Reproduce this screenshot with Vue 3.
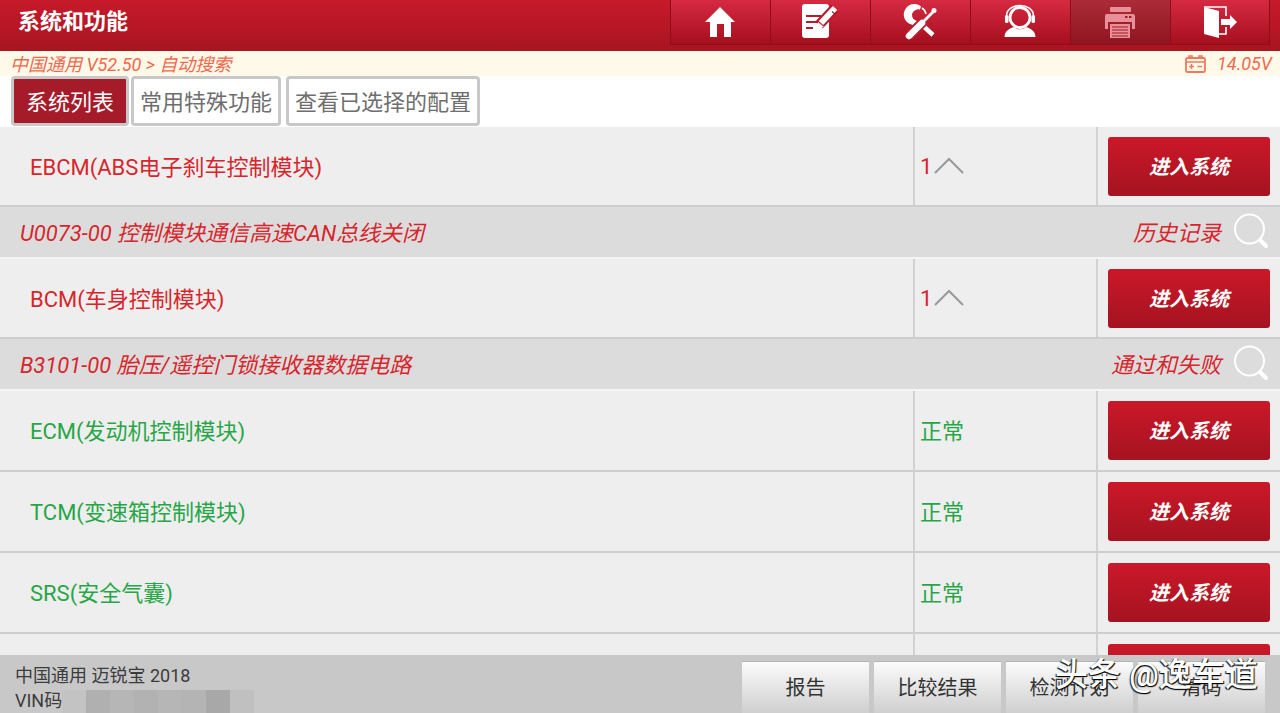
<script setup>
import { ref } from 'vue'

const activeTab = ref(0)
const tabs = ['系统列表', '常用特殊功能', '查看已选择的配置']
const toolbar = ['home', 'edit', 'tools', 'support', 'print', 'exit']
const footerBtns = ['报告', '比较结果', '检测计划', '清码']
const blurCells = ['#c3c3c3', '#b0b0b0', '#b6b6b6', '#b2b2b2', '#b6b6b6', '#b4b4b4', '#a8a8a8', '#c0c0c0']

const rows = [
  { type: 'sys', name: 'EBCM(ABS电子刹车控制模块)', count: 1, cls: 'short' },
  { type: 'code', text: 'U0073-00 控制模块通信高速CAN总线关闭', status: '历史记录' },
  { type: 'sys', name: 'BCM(车身控制模块)', count: 1, cls: 'short' },
  { type: 'code', text: 'B3101-00 胎压/遥控门锁接收器数据电路', status: '通过和失败' },
  { type: 'sys', name: 'ECM(发动机控制模块)', ok: true },
  { type: 'sys', name: 'TCM(变速箱控制模块)', ok: true },
  { type: 'sys', name: 'SRS(安全气囊)', ok: true },
  { type: 'sys', name: '', blank: true }
]
</script>

<template>
  <div class="page">
    <header class="topbar">
      <div class="title">系统和功能</div>
      <div class="toolbar">
        <button
          v-for="item in toolbar"
          :key="item"
          class="tool"
          :class="{ disabled: item === 'print' }"
        >
          <svg width="40" height="40" viewBox="0 0 40 40">
            <path v-if="item === 'home'" fill="#fff" d="M20 5 L35 20 H31 V35 H24 V22 H17 V35 H10 V20 H5 Z" />
            <g v-else-if="item === 'edit'">
              <rect x="2" y="2" width="27" height="34" rx="3" fill="#fff" />
              <path d="M6 14 H21 M6 20 H17 M6 26 H13" stroke="#b8192b" stroke-width="2" fill="none" />
              <path d="M35 6 L19 23" stroke="#b8192b" stroke-width="10" fill="none" />
              <path d="M35 6 L21 21" stroke="#fff" stroke-width="6" fill="none" />
              <path d="M17 27 L18 20 L24 25 Z" fill="#fff" />
              <path d="M32 9.5 L36 13" stroke="#b8192b" stroke-width="1.2" />
            </g>
            <g v-else-if="item === 'tools'">
              <path d="M21 4.500 A10.500 10.500 0 1 0 13 23 L17 19 A7 7 0 0 1 12 12 A7 7 0 0 1 20 7.500 Z" fill="#fff" />
              <path d="M22 6 A9 9 0 0 1 26 12" fill="none" stroke="#fff" stroke-width="1.500" />
              <path d="M20 21 L33 33" stroke="#fff" stroke-width="4.500" fill="none" />
              <path d="M9 34 L23 20" stroke="#bd1d2e" stroke-width="10" fill="none" />
              <path d="M9 34 L22 21" stroke="#fff" stroke-width="6.500" stroke-linecap="round" fill="none" />
              <path d="M21 22 L33 10" stroke="#fff" stroke-width="2.800" fill="none" />
              <circle cx="34" cy="8.500" r="2.500" fill="#fff" />
            </g>
            <g v-else-if="item === 'support'">
              <circle cx="20" cy="15.500" r="10" fill="none" stroke="#fff" stroke-width="2.800" />
              <path d="M6.500 19 V14 C6.500 0 33.500 0 33.500 14 V19" fill="none" stroke="#fff" stroke-width="1.600" />
              <rect x="5" y="13" width="3.500" height="8" rx="1.500" fill="#fff" />
              <rect x="31.500" y="13" width="3.500" height="8" rx="1.500" fill="#fff" />
              <path d="M4.500 35 C4.500 29 10 26 14 25 C17 28 23 28 26 25 C30 26 35.500 29 35.500 35 Z" fill="#fff" />
            </g>
            <g v-else-if="item === 'print'" fill="#e88f99">
              <rect x="10" y="5" width="21" height="5" rx="1" />
              <path d="M7 12 H33 Q35 12 35 14 V27 H32 V20 H8 V27 H5 V14 Q5 12 7 12 Z" />
              <path d="M10 22 H30 V36 H10 Z" />
              <path d="M12 25 H28 M12 28 H28 M12 31 H28 M12 34 H28" stroke="#a51a28" stroke-width="1" />
              <rect x="25" y="14" width="2.500" height="2" fill="#a51a28" />
              <rect x="29" y="14" width="2.500" height="2" fill="#a51a28" />
            </g>
            <g v-else>
              <path d="M5 5 H27 V14 M27 25 V32 H20" fill="none" stroke="#fff" stroke-width="1.600" />
              <path d="M5 5 L20 9 V36 L5 32 Z" fill="#fff" />
              <path d="M22 17 H31 V13 L38 20 L31 27 V23 H22 Z" fill="#fff" />
            </g>
          </svg>
        </button>
      </div>
    </header>

    <div class="crumb">
      <span>中国通用 V52.50 &gt; 自动搜索</span>
      <span class="volt">
        <svg width="21" height="18" viewBox="0 0 21 18">
          <path d="M4 3 V1 H7 V3 M14 3 V1 H17 V3" fill="none" stroke="#f0795c" stroke-width="1.500" />
          <rect x="1" y="3" width="19" height="14" rx="1.500" fill="none" stroke="#f0795c" stroke-width="1.800" />
          <path d="M1 7 H20 M4 11.500 H9 M6.500 9 V14 M12.500 11.500 H17" fill="none" stroke="#f0795c" stroke-width="1.500" />
        </svg>
        <i>14.05V</i>
      </span>
    </div>

    <nav class="tabs">
      <div
        v-for="(tab, i) in tabs"
        :key="tab"
        class="tab"
        :class="{ active: activeTab === i }"
        @click="activeTab = i"
      >{{ tab }}</div>
    </nav>

    <main class="list">
      <template v-for="(row, i) in rows" :key="i">
        <div v-if="row.type === 'code'" class="code-row">
          <span class="code-text">{{ row.text }}</span>
          <span class="code-status">{{ row.status }}</span>
          <svg class="search" width="36" height="36" viewBox="0 0 36 36">
            <circle cx="16.500" cy="16" r="14.500" fill="none" stroke="#fff" stroke-width="2" />
            <path d="M27 27 L33 33" stroke="#fff" stroke-width="4" stroke-linecap="round" />
          </svg>
        </div>
        <div v-else class="sys-row" :class="[row.cls, { ok: row.ok }]">
          <div class="cell name">{{ row.name }}</div>
          <div class="cell state">
            <template v-if="row.count">
              <span>{{ row.count }}</span>
              <svg width="32" height="18" viewBox="0 0 32 18">
                <path d="M2 16 L16 2 L30 16" fill="none" stroke="#999" stroke-width="2" />
              </svg>
            </template>
            <span v-else-if="row.ok">正常</span>
          </div>
          <div class="cell action">
            <button class="enter">{{ row.blank ? '' : '进入系统' }}</button>
          </div>
        </div>
      </template>
    </main>

    <footer class="footer">
      <div class="car-info">
        <div>中国通用 迈锐宝 2018</div>
        <div class="vin">
          VIN码
          <span class="mosaic">
            <i v-for="(c, i) in blurCells" :key="i" :style="{ background: c }"></i>
          </span>
        </div>
      </div>
      <div class="footer-btns">
        <button v-for="b in footerBtns" :key="b" class="foot-btn">{{ b }}</button>
      </div>
    </footer>

    <div class="watermark">头条 @逸车道</div>
  </div>
</template>

<style>
html, body {
  margin: 0;
  background: #fff;
}
</style>

<style scoped>
.page {
  position: relative;
  width: 1280px;
  height: 713px;
  overflow: hidden;
  display: flex;
  flex-direction: column;
  background: #fff;
  font-family: Roboto, "Noto Sans CJK SC", sans-serif;
}

.topbar {
  height: 51px;
  flex: none;
  display: flex;
  justify-content: space-between;
  background: linear-gradient(#c71a2b, #a81420);
}

.title {
  padding-left: 18px;
  line-height: 44px;
  font-size: 22px;
  font-weight: 700;
  color: #fff;
}

.toolbar {
  display: flex;
  height: 44px;
  margin-right: 10px;
  border-bottom: 1px solid #8f0d18;
}

.tool {
  width: 100px;
  padding: 0 2px 0 0;
  border: 0;
  border-left: 1px solid #8f0d18;
  display: flex;
  align-items: center;
  justify-content: center;
  background: linear-gradient(#d62a41, #a50f1e);
}

.tool:last-child {
  border-right: 1px solid #8f0d18;
}

.tool.disabled {
  background: linear-gradient(#ab2c38, #8f1520);
}

.crumb {
  height: 25px;
  flex: none;
  box-sizing: border-box;
  display: flex;
  justify-content: space-between;
  align-items: center;
  padding: 0 8px 2px 10px;
  background: #fff9e9;
  color: #f0694f;
  font-size: 18px;
  font-style: italic;
}

.volt {
  display: flex;
  align-items: center;
  gap: 11px;
  margin-top: 2px;
}

.volt i {
  font-size: 18px;
}

.tabs {
  height: 51px;
  flex: none;
  box-sizing: border-box;
  padding: 0 0 0 11px;
  display: flex;
  align-items: flex-start;
}

.tab {
  box-sizing: border-box;
  height: 50px;
  padding: 0 6px;
  margin-right: 5px;
  border: 3px solid #c8c8c8;
  border-radius: 4px;
  background: #fff;
  color: #6e6e6e;
  font-size: 22px;
  line-height: 47px;
}

.tab.active {
  padding: 0 12px;
  margin-right: 2px;
  background: #a51b29;
  color: #fff;
}

.list {
  flex: 1;
  min-height: 0;
  overflow: hidden;
}

.sys-row {
  box-sizing: border-box;
  height: 81px;
  display: grid;
  grid-template-columns: 915px 183px 182px;
  border-bottom: 2px solid #cdcdcd;
  background: #eeeeee;
  color: #d8252c;
  font-size: 22px;
}

.sys-row.short {
  height: 80px;
}

.sys-row.ok {
  color: #27a648;
}

.cell {
  box-sizing: border-box;
  display: flex;
  align-items: center;
  border-right: 2px solid #d2d2d2;
}

.name {
  padding: 0 0 2px 30px;
}

.state {
  padding: 0 0 0 5px;
  gap: 3px;
}

.ok .name,
.ok .state {
  padding-bottom: 4px;
}

.state svg {
  margin-left: -2px;
}

.action {
  border-right: 0;
  align-items: flex-start;
  padding: 10px 10px 0;
}

.enter {
  width: 162px;
  height: 59px;
  padding: 0 0 2px;
  border: 0;
  border-radius: 3px;
  background: linear-gradient(#cb1829, #a51320);
  color: #fff;
  font-family: inherit;
  font-size: 20px;
  font-weight: 700;
  font-style: italic;
}

.code-row {
  box-sizing: border-box;
  height: 52px;
  display: flex;
  align-items: center;
  padding: 0 11px 2px 20px;
  border-bottom: 2px solid #f4f4f4;
  background: #dcdcdc;
  color: #d8252c;
  font-size: 22px;
  font-style: italic;
}

.code-text {
  flex: 1;
}

.code-status {
  margin-right: 12px;
}

.footer {
  height: 58px;
  flex: none;
  display: flex;
  justify-content: space-between;
  background: #c8c8c8;
}

.car-info {
  padding: 8px 0 0 15px;
  color: #3c3c3c;
  font-size: 18px;
  line-height: 25px;
}

.vin {
  display: flex;
  align-items: center;
}

.mosaic {
  display: flex;
  margin-top: 2px;
}

.mosaic i {
  width: 24px;
  height: 23px;
}

.footer-btns {
  display: flex;
  gap: 5px;
  padding: 6px 15px 0 0;
}

.foot-btn {
  width: 127px;
  height: 52px;
  padding: 0 0 2px;
  border: 0;
  border-top: 1px solid #b4b4b4;
  background: linear-gradient(#fbfbfb, #cfcfcf);
  color: #333;
  font-family: inherit;
  font-size: 20px;
}

.watermark {
  position: absolute;
  left: 1055px;
  top: 655px;
  color: #fff;
  font-size: 33px;
  font-weight: 500;
  line-height: 40px;
  white-space: nowrap;
  text-shadow: 1px 1px 1px #000, -1px 1px 1px #222;
}
</style>
